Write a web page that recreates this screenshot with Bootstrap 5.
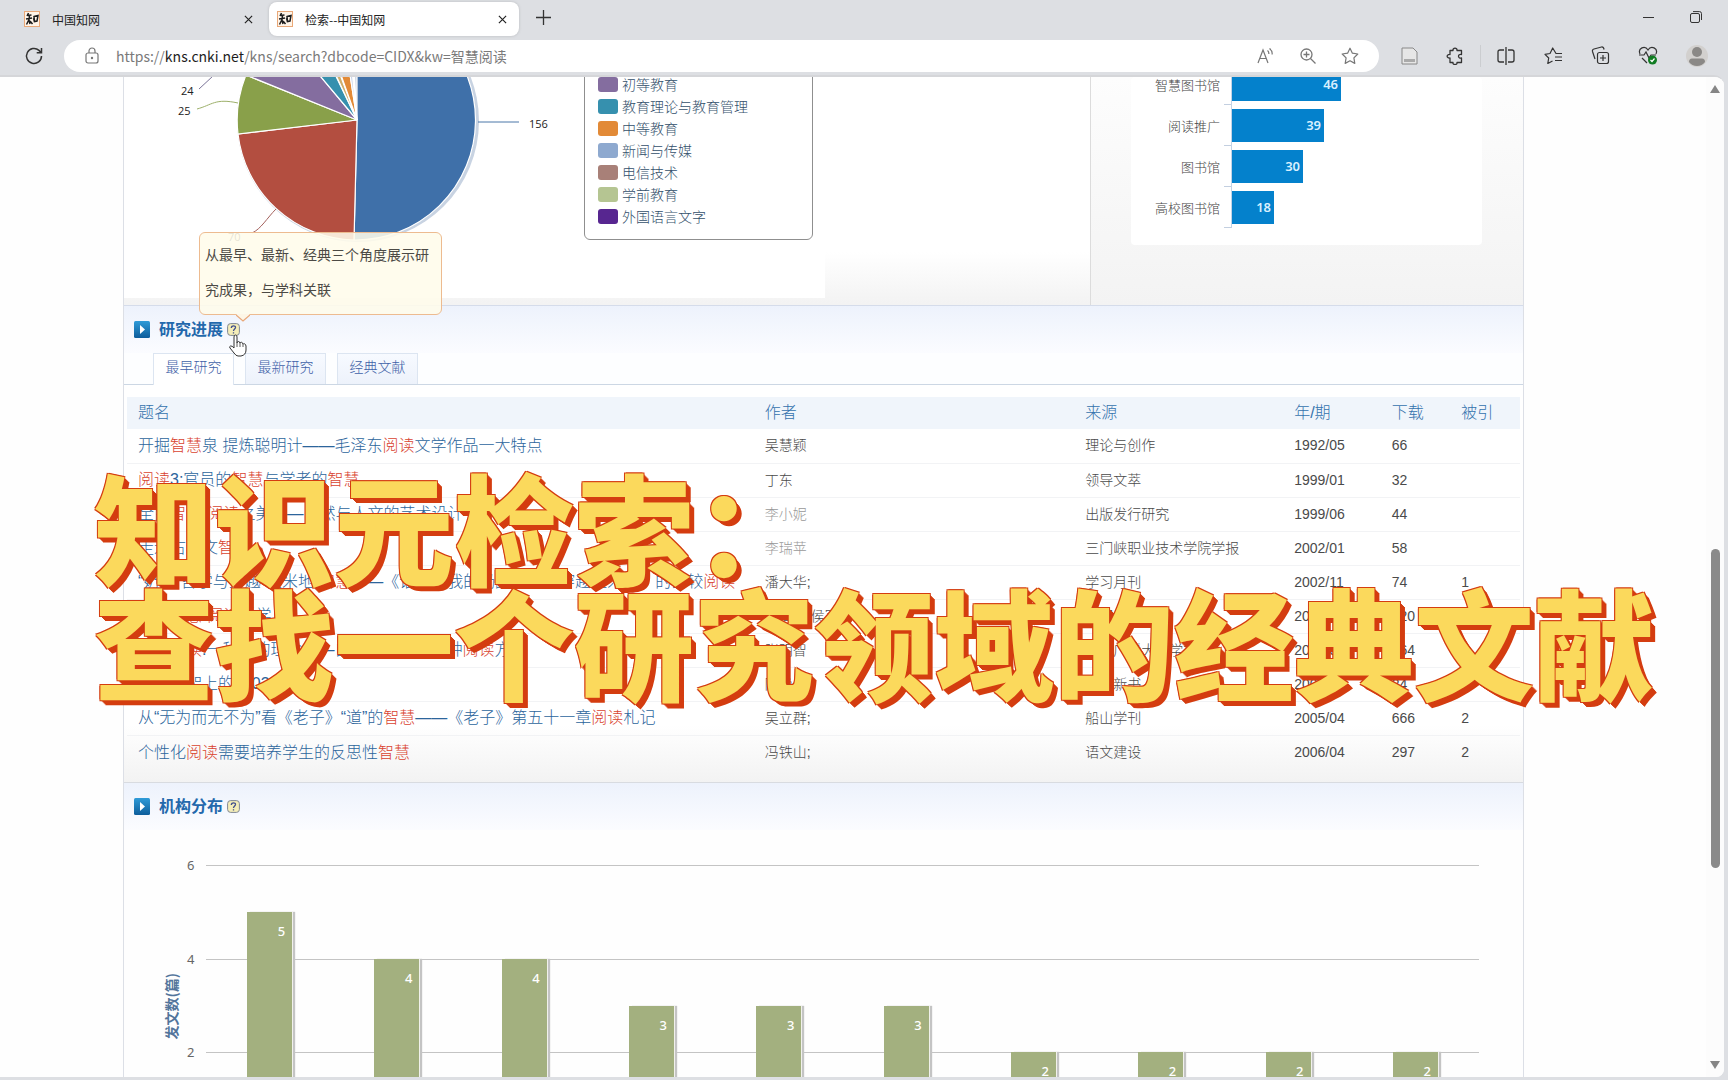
<!DOCTYPE html>
<html lang="zh-CN">
<head>
<meta charset="utf-8">
<meta name="viewport" content="width=device-width, initial-scale=1">
<title>检索--中国知网</title>
<link href="https://cdn.jsdelivr.net/npm/bootstrap@5.3.0/dist/css/bootstrap.min.css" rel="stylesheet">
<style>
  body { font-family: "Liberation Sans", "Noto Sans CJK SC", sans-serif; font-size: 14px; background: #dddfe3; }
  button { color: inherit; }
  a { text-decoration: none; }

  /* browser frame */
  .strip { height: 38px; padding: 2px 0 0 16px; font: 12px "Noto Sans CJK SC", sans-serif; color: #222; }
  .strip-tab { width: 253px; height: 34px; padding: 0 8px; border-radius: 8px; }
  .strip-tab.current { width: 250px; background: #fff; box-shadow: 0 0 3px #b8babd; }
  .plain { border: 0; background: none; padding: 0; display: inline-flex; align-items: center; justify-content: center; }
  .win { width: 48px; height: 30px; }
  .toolbar { height: 37px; padding: 0 20px 2px 0; color: #333; }
  .omni { height: 32px; border-radius: 16px; background: #fff; padding: 0 16px; margin-left: 20px; color: #777; }
  .omni-text { font: 14px/32px "Noto Sans CJK SC", sans-serif; color: #7a7a7a; }
  .omni-text b { font-weight: 400; color: #1d1d1d; }
  .tools { width: 329px; padding: 0 0 0 18px; }
  .tools .vr { margin: 0 -12px; opacity: .1; }
  .sheet { border-top: 2px solid #d5d6d9; border-radius: 0 10px 8px 0; background: #fefefe; margin: 0 4px 3px 0; }
  .scroller { width: 18px; padding: 8px 0; background: #fcfcfc; }
  .thumb { width: 9px; height: 319px; border-radius: 5px; background: #8a8a8a; }

  /* page column */
  .page { padding: 0 182px 0 123px; }
  .column { border: solid #dcdfe6; border-width: 0 1px; }
  .overview { height: 229px; border-bottom: 1px solid #d5dcea; background: linear-gradient(#fff 0 175px, #f3f3f3 226px); }
  .subject { width: 967px; border-right: 1px solid #dcdcdc; }
  .canvas-white { width: 701px; height: 221px; background: #fff; }
  .keywords { background: linear-gradient(#fdfdfd, #f3f3f3); padding: 0 40px; }
  .keywords-chart { height: 168px; max-width: 351px; background: #fff; border-radius: 4px; padding-bottom: 17px; overflow: hidden; }
  .legend-box { width: 229px; height: 171px; margin-top: -8px; border: 1px solid #8f8f8f; border-radius: 6px; padding: 3px 13px; font: 14px/22px "Noto Sans CJK SC", sans-serif; font-weight: 300; color: #33506b; }
  .legend-box li { height: 22px; }
  .swatch { width: 20px; height: 15px; border-radius: 3px; }
  .kw-row { height: 41px; font: 13px "Noto Sans CJK SC", sans-serif; font-weight: 300; color: #444; }
  .kw-name { width: 93px; }
  .kw-tick { width: 7px; border-bottom: 1px solid #c3cfe0; }
  .kw-plot { border-left: 1px solid #c3d3e6; padding: 4px 0; }
  .kw-bar { height: 33px; background: #0481cc; color: #d8f0ff; padding-right: 3px; font: 600 13px/32px "Noto Sans", sans-serif; }

  .head { height: 47px; padding-left: 10px; background: linear-gradient(#edf2fc, #fbfcff); }
  .head h2 { font-size: 16px; font-weight: 700; color: #2368ac; margin: 0 4px 0 9px; }
  .topics { border-bottom: 1px solid #ccd7e4; padding-left: 29px; gap: 11px; background: #fdfeff; }
  .topic { width: 81px; height: 31px; padding: 0 0 4px; border: 1px solid #dce5f1; border-bottom: 0; background: linear-gradient(#f7faff, #edf2fb); color: #3f62a8; font-size: 14px; font-weight: 300; }
  .topic.chosen { background: #fff; margin-bottom: -1px; height: 32px; }
  .progress-list { padding: 12px 3px 12px; background: linear-gradient(#fff 0 340px, #f2f2f2 399px); border-bottom: 1px solid #d8dbe0; }
  .papers { table-layout: fixed; width: 100%; font-weight: 300; color: #4a4a4a; }
  .papers th { height: 32px; background: #f0f5fb; color: #3472ad; font-size: 16px; font-weight: 300; padding: 0 11px 0 11px; }
  .papers td { height: 34px; border-bottom: 1px solid #f2f3f5; padding: 0 11px; white-space: nowrap; }
  .papers tr:last-child td { height: 35px; border-bottom: 0; }
  .papers a { font-size: 16px; color: #2c659c; }
  .papers em { font-style: normal; color: #d9432f; }
  .papers .faded { color: #999; }

  .tip { position: absolute; left: 199px; top: 155px; width: 243px; height: 83px; padding: 5px 5px; background: rgba(255,252,235,.88); border: 1px solid #edbb90; border-radius: 6px; font-size: 14px; line-height: 35px; color: #4c4a45; z-index: 3; }
  .tip svg { position: absolute; left: 36px; top: 81px; }
  .hand { position: absolute; left: 228px; top: 257px; z-index: 4; }

  /* institutions chart */
  .orgs { height: 420px; padding: 35px 44px 0 82px; background: #fefefe; font: 13px "Noto Sans", sans-serif; color: #666; }
  .axis-name { position: absolute; left: 38px; top: 143px; writing-mode: vertical-rl; text-orientation: sideways; transform: rotate(180deg); font: 700 14px/18px "Noto Sans CJK SC", sans-serif; color: #52749b; }
  .grid-line { position: absolute; left: 0; right: 0; border-top: 1px solid #c4c4c4; }
  .grid-line span { position: absolute; left: -19px; top: -10px; line-height: 18px; }
  .org-bar { position: relative; width: 45px; background: #a3b07f; color: #fff; padding: 9px 7px; line-height: 20px; text-align: right; box-shadow: 1px 0 0 #f1f1ec, 3px 0 1px #c4c4c4; font-weight: 500; }

  .caption-text { position: absolute; left: 94px; top: 468px; font: 900 120px/115px "Noto Sans CJK SC", sans-serif; color: #fbd95c; text-shadow: 1px 1px 0 #d43d10, -1px -1px 0 #d43d10, 1px -1px 0 #d43d10, -1px 1px 0 #d43d10, 2px 2px 0 #d43d10, 3px 3px 0 #d43d10, 4px 4px 0 #d43d10, 5px 5px 0 #d43d10; white-space: nowrap; z-index: 6; pointer-events: none; }
</style>
</head>
<body class="vh-100 overflow-hidden d-flex flex-column">
<svg class="position-absolute" width="0" height="0">
  <defs><linearGradient id="pg" x2="0" y2="1"><stop stop-color="#2f9bd8"/><stop offset="1" stop-color="#0d5d9b"/></linearGradient></defs>
  <symbol id="logo" viewBox="0 0 16 16"><rect x=".5" y=".5" width="15" height="15" fill="#fff4e8" stroke="#e9a878"/><path d="M4.500 2 3 5M3 4.500l4.500-.5M2 8l6-1M5.500 4.500 5 8.500 2.500 13.500M5 9l1 4M6 10l2.500 3M10 5.500l4-1-1 5.500-2.500.5zM9.500 7l1 4" fill="none" stroke="#1d1d1d" stroke-width="1.500"/></symbol>
  <symbol id="cross" viewBox="0 0 10 10"><path d="M1 1l8 8M9 1 1 9" stroke="currentColor" stroke-width="1.300"/></symbol>
  <symbol id="play" viewBox="0 0 16 17"><rect width="16" height="17" rx="1.500" fill="url(#pg)"/><path d="M6 4l5 4.500L6 13z" fill="#fff"/></symbol>
  <symbol id="help" viewBox="0 0 13 13"><rect x=".6" y=".6" width="11.800" height="11.800" rx="3" fill="#f4edb8" stroke="#7f8796"/><path d="M4.300 5c0-3 4.500-2.700 4.200-.3C8.300 6 6.500 6 6.500 8M6.500 9.200v1.300" fill="none" stroke="#3f4d8c" stroke-width="1.300"/></symbol>
</svg>

<header>
  <div class="strip d-flex align-items-start">
    <div class="strip-tab d-flex align-items-center">
      <svg width="16" height="16"><use href="#logo"/></svg><span class="ms-2 ps-1 me-auto">中国知网</span>
      <button class="plain me-2" aria-label="关闭"><svg width="9" height="9"><use href="#cross"/></svg></button>
    </div>
    <div class="strip-tab current d-flex align-items-center">
      <svg width="16" height="16"><use href="#logo"/></svg><span class="ms-2 ps-1 me-auto">检索--中国知网</span>
      <button class="plain me-1" aria-label="关闭"><svg width="9" height="9"><use href="#cross"/></svg></button>
    </div>
    <button class="plain win ms-0" aria-label="新建标签页"><svg width="15" height="15" viewBox="0 0 15 15"><path d="M7.500 0v15M0 7.500h15" stroke="#333" stroke-width="1.300"/></svg></button>
    <button class="plain win ms-auto" aria-label="最小化"><svg width="11" height="11"><path d="M0 5.500h11" stroke="#333"/></svg></button>
    <button class="plain win me-2" aria-label="还原"><svg width="12" height="12" viewBox="0 0 12 12" fill="none" stroke="#333"><rect x=".5" y="2.500" width="9" height="9" rx="1.500"/><path d="M3 .6h6.500q2 0 2 2V9"/></svg></button>
  </div>
  <div class="toolbar d-flex align-items-center">
    <button class="plain ms-4" aria-label="刷新"><svg width="20" height="20" viewBox="0 0 20 20" fill="none" stroke="#333" stroke-width="1.500"><path d="M17.500 10a7.500 7.500 0 1 1-2.500-5.600L17 6.500M17.500 2v4.800h-4.800"/></svg></button>
    <div class="omni d-flex align-items-center flex-grow-1">
      <svg class="ms-1" width="16" height="17" viewBox="0 0 16 17" fill="none" stroke="#777" stroke-width="1.200"><rect x="2" y="6" width="12" height="10" rx="2"/><path d="M5 6V4a3 3 0 0 1 6 0v2"/><circle cx="8" cy="11" r=".6" fill="#777"/></svg>
      <div class="omni-text ms-3 me-auto">https://<b>kns.cnki.net</b>/kns/search?dbcode=CIDX&amp;kw=智慧阅读</div>
      <div class="d-flex align-items-center gap-4 me-1">
        <button class="plain" aria-label="朗读"><svg width="18" height="18" viewBox="0 0 18 18" fill="none" stroke="#777" stroke-width="1.200"><path d="M1 16 6 3l5 13M3 11.500h6M10.500 3.500c1 .8 1.500 2 1.300 3.500M12.500 1.500c2 1.500 3 3.500 2.600 6"/></svg></button>
        <button class="plain" aria-label="缩放"><svg width="18" height="18" viewBox="0 0 18 18" fill="none" stroke="#777" stroke-width="1.300"><circle cx="7.500" cy="7.500" r="5.500"/><path d="m11.500 11.500 5 5M4.500 7.500h6M7.500 4.500v6"/></svg></button>
        <button class="plain" aria-label="收藏"><svg width="18" height="18" viewBox="0 0 18 18" fill="none" stroke="#777" stroke-width="1.200" stroke-linejoin="round"><path d="m9 1.200 2.400 5 5.400.8-3.900 3.900.9 5.500L9 13.800l-4.800 2.600.9-5.500L1.200 7l5.400-.8z"/></svg></button>
      </div>
    </div>
    <div class="tools d-flex align-items-center justify-content-between">
      <svg class="ms-1" width="17" height="18" viewBox="0 0 17 18" fill="#e6e6e6" stroke="#888"><path d="M1 1h11l4 4v12H1z"/><path d="M3 12h11v3H3z" fill="#aaa" stroke="none"/></svg>
      <svg width="18" height="18" viewBox="0 0 18 18" fill="none" stroke="#333" stroke-width="1.300" stroke-linejoin="round"><path d="M4 3.500h3C6.500.3 11.500.3 11 3.500h4.500v4c-4-.8-4 4.300 0 3.500v4.500H11c.5 2.800-4.500 2.800-4 0H4V11c-3.800.5-3.800-4 0-3.500z"/></svg>
      <span class="vr"></span>
      <svg width="18" height="18" viewBox="0 0 18 18" fill="none" stroke="#333" stroke-width="1.300"><path d="M9 0v18M7 3H3Q1 3 1 5v8q0 2 2 2h4M11 3h4q2 0 2 2v8q0 2-2 2h-4"/></svg>
      <svg width="19" height="18" viewBox="0 0 19 18" fill="none" stroke="#333" stroke-width="1.200" stroke-linejoin="round"><path d="M18 6.500h-6L8.700 1 6 6.500l-5 .8 3.700 3.700L3.800 16.500l4.700-2.500M11 10h7M11 13.500h7"/></svg>
      <svg width="19" height="19" viewBox="0 0 19 19" fill="none" stroke="#333" stroke-width="1.200"><rect x="6.500" y="6.500" width="11" height="11" rx="2"/><path d="M12 9v6M9 12h6M4 13 1.500 5.500Q1 3.500 3 3l7.500-2q2-.3 2.600 2.500"/></svg>
      <svg width="20" height="19" viewBox="0 0 20 19" fill="none" stroke="#333" stroke-width="1.200"><path d="M2 8C-.5 2 7-1 10 4c3-5 10.500-2 8 4M1 9h5l2-3 3 6 2-3h5M4 12l5 5"/><circle cx="14.500" cy="14" r="4.500" fill="#107c22" stroke="none"/><path d="m12.500 14 1.500 1.500 2.500-3" stroke="#fff"/></svg>
      <svg width="22" height="22" viewBox="0 0 22 22"><circle cx="11" cy="11" r="11" fill="#d2d0ce"/><circle cx="11" cy="7" r="5" fill="#8a8886"/><path d="M3 17q0-3.500 3-3.500h10q3 0 3 3.500-3 4-8 4t-8-4z" fill="#8a8886"/></svg>
    </div>
  </div>
</header>

<div class="sheet flex-grow-1 d-flex overflow-hidden position-relative" style="min-height:0">
  <main class="page flex-grow-1 overflow-hidden">
    <div class="column">
      <section class="overview d-flex">
        <div class="subject flex-shrink-0">
          <div class="canvas-white d-flex">
            <svg width="460" height="221" viewBox="124 77 460 221" font-family="Open Sans, sans-serif" font-size="11" fill="#222">
              <circle cx="358" cy="121" r="121" fill="#c8d3e2"/>
              <g stroke="#fff" stroke-width="1.200">
                <path d="M357 120V0A120 120 0 1 1 354 240z" fill="#3f70a9"/>
                <path d="M357 120 354 240A120 120 0 0 1 238 134z" fill="#b34e40"/>
                <path d="M357 120 238 134A120 120 0 0 1 246 75z" fill="#89a04a"/>
                <path d="M357 120 246 75 280 28z" fill="#846d9f"/>
                <path d="M357 120 280 28 305 12z" fill="#3690ae"/>
                <path d="M357 120 310 20 316 10z" fill="#cfae6b"/>
                <path d="M357 120 318 10 340 10z" fill="#e28a37"/>
                <path d="M357 120 340 10 345 0z" fill="#c9d4e8"/>
                <path d="M357 120 347 0 350 0z" fill="#d9cfd2"/>
              </g>
              <g fill="none"><path d="M478 122h41" stroke="#4a77a8"/><path d="M197 109c15-4 18-11 41-6" stroke="#9db06a"/><path d="m199 89 14-13" stroke="#7a7397"/><path d="M276 209c-9 9-15 20-24 24" stroke="#a3605c"/></g>
              <text x="529" y="128">156</text><text x="181" y="95">24</text><text x="178" y="115">25</text><text x="228" y="241">70</text>
            </svg>
            <ul class="legend-box list-unstyled mb-0">
              <li class="d-flex align-items-center gap-1"><i class="swatch" style="background:#846d9f"></i>初等教育</li>
              <li class="d-flex align-items-center gap-1"><i class="swatch" style="background:#3690ae"></i>教育理论与教育管理</li>
              <li class="d-flex align-items-center gap-1"><i class="swatch" style="background:#e28a37"></i>中等教育</li>
              <li class="d-flex align-items-center gap-1"><i class="swatch" style="background:#8ea9cf"></i>新闻与传媒</li>
              <li class="d-flex align-items-center gap-1"><i class="swatch" style="background:#a88078"></i>电信技术</li>
              <li class="d-flex align-items-center gap-1"><i class="swatch" style="background:#b5c592"></i>学前教育</li>
              <li class="d-flex align-items-center gap-1"><i class="swatch" style="background:#572690"></i>外国语言文字</li>
            </ul>
          </div>
        </div>
        <div class="keywords flex-grow-1">
          <div class="keywords-chart d-flex flex-column justify-content-end">
            <div class="kw-row d-flex"><span class="kw-name align-self-center text-end pe-1">智慧图书馆</span><i class="kw-tick"></i><div class="kw-plot"><div class="kw-bar text-end" style="width:109px">46</div></div></div>
            <div class="kw-row d-flex"><span class="kw-name align-self-center text-end pe-1">阅读推广</span><i class="kw-tick"></i><div class="kw-plot"><div class="kw-bar text-end" style="width:92px">39</div></div></div>
            <div class="kw-row d-flex"><span class="kw-name align-self-center text-end pe-1">图书馆</span><i class="kw-tick"></i><div class="kw-plot"><div class="kw-bar text-end" style="width:71px">30</div></div></div>
            <div class="kw-row d-flex"><span class="kw-name align-self-center text-end pe-1">高校图书馆</span><i class="kw-tick"></i><div class="kw-plot"><div class="kw-bar text-end" style="width:42px">18</div></div></div>
          </div>
        </div>
      </section>

      <section>
        <div class="head d-flex align-items-center"><svg width="16" height="17"><use href="#play"/></svg><h2>研究进展</h2><svg width="13" height="13"><use href="#help"/></svg></div>
        <div class="topics d-flex align-items-end">
          <button class="topic chosen">最早研究</button><button class="topic">最新研究</button><button class="topic">经典文献</button>
        </div>
        <div class="progress-list">
          <table class="papers">
            <colgroup><col style="width:45%"><col style="width:23%"><col style="width:15%"><col style="width:7%"><col style="width:5%"><col style="width:5%"></colgroup>
            <thead><tr><th>题名</th><th>作者</th><th>来源</th><th>年/期</th><th class="text-nowrap">下载</th><th class="text-nowrap">被引</th></tr></thead>
            <tbody>
              <tr><td><a href="#">开掘<em>智慧</em>泉 提炼聪明计——毛泽东<em>阅读</em>文学作品一大特点</a></td><td>吴慧颖</td><td>理论与创作</td><td>1992/05</td><td>66</td><td></td></tr>
              <tr><td><a href="#"><em>阅读</em>3:官员的<em>智慧</em>与学者的<em>智慧</em></a></td><td>丁东</td><td>领导文萃</td><td>1999/01</td><td>32</td><td></td></tr>
              <tr><td><a href="#">全民<em>智慧</em>·<em>阅读</em>之美——自然与人文的艺术设计</a></td><td class="faded">李小妮</td><td>出版发行研究</td><td>1999/06</td><td>44</td><td></td></tr>
              <tr><td><a href="#">走进古诗文<em>智慧</em></a></td><td class="faded">李瑞苹</td><td>三门峡职业技术学院学报</td><td>2002/01</td><td>58</td><td></td></tr>
              <tr><td><a href="#">“奶酪”哲学与穿越“玉米地”<em>智慧</em>——《谁动了我的奶酪》与《穿越玉米地》的比较<em>阅读</em></a></td><td>潘大华;</td><td>学习月刊</td><td>2002/11</td><td>74</td><td>1</td></tr>
              <tr><td><a href="#">生活<em>智慧</em>·<em>阅读</em>哲学</a></td><td>王海燕,侯军</td><td>中国出版评论</td><td>2003/03</td><td>120</td><td></td></tr>
              <tr><td><a href="#"><em>智慧阅读</em>:一种新的理念——自主学习方式一种<em>阅读</em>方法</a></td><td>张明智</td><td>江苏广播大学学报</td><td>2004/01</td><td>164</td><td></td></tr>
              <tr><td><a href="#">我的书架上的2003年</a></td><td>陈静</td><td>中国新书</td><td>2004/10</td><td>24</td><td></td></tr>
              <tr><td><a href="#">从“无为而无不为”看《老子》“道”的<em>智慧</em>——《老子》第五十一章<em>阅读</em>札记</a></td><td>吴立群;</td><td>船山学刊</td><td>2005/04</td><td>666</td><td>2</td></tr>
              <tr><td><a href="#">个性化<em>阅读</em>需要培养学生的反思性<em>智慧</em></a></td><td>冯铁山;</td><td>语文建设</td><td>2006/04</td><td>297</td><td>2</td></tr>
            </tbody>
          </table>
        </div>
      </section>

      <section>
        <div class="head d-flex align-items-center"><svg width="16" height="17"><use href="#play"/></svg><h2>机构分布</h2><svg width="13" height="13"><use href="#help"/></svg></div>
        <div class="orgs position-relative">
          <div class="axis-name">发文数(篇)</div>
          <div class="position-relative d-flex align-items-end" style="height:282px">
            <div class="grid-line" style="top:0"><span>6</span></div>
            <div class="grid-line" style="top:94px"><span>4</span></div>
            <div class="grid-line" style="top:187px"><span>2</span></div>
            <div class="flex-fill d-flex justify-content-center"><div class="org-bar" style="height:235px">5</div></div>
            <div class="flex-fill d-flex justify-content-center"><div class="org-bar" style="height:188px">4</div></div>
            <div class="flex-fill d-flex justify-content-center"><div class="org-bar" style="height:188px">4</div></div>
            <div class="flex-fill d-flex justify-content-center"><div class="org-bar" style="height:141px">3</div></div>
            <div class="flex-fill d-flex justify-content-center"><div class="org-bar" style="height:141px">3</div></div>
            <div class="flex-fill d-flex justify-content-center"><div class="org-bar" style="height:141px">3</div></div>
            <div class="flex-fill d-flex justify-content-center"><div class="org-bar" style="height:95px">2</div></div>
            <div class="flex-fill d-flex justify-content-center"><div class="org-bar" style="height:95px">2</div></div>
            <div class="flex-fill d-flex justify-content-center"><div class="org-bar" style="height:95px">2</div></div>
            <div class="flex-fill d-flex justify-content-center"><div class="org-bar" style="height:95px">2</div></div>
          </div>
        </div>
      </section>
    </div>
  </main>

  <div class="scroller d-flex flex-column align-items-center flex-shrink-0">
    <svg width="10" height="8"><path d="M0 8 5 0l5 8z" fill="#858585"/></svg>
    <div style="flex-grow:454"></div><div class="thumb"></div><div style="flex-grow:192"></div>
    <svg width="10" height="8"><path d="M0 0h10L5 8z" fill="#858585"/></svg>
  </div>

  <div class="tip" role="tooltip">从最早、最新、经典三个角度展示研究成果，与学科关联
    <svg width="14" height="8"><path d="M0 0h14L7 7z" fill="#fdf6e6"/><path d="m0 1 7 6 7-6" fill="none" stroke="#e9a878" stroke-width="1.300"/></svg>
  </div>
  <svg class="hand" width="20" height="23" viewBox="0 0 20 23"><path d="M6 14V3q0-2 1.500-2T9 3v6q0-1.500 1.500-1.500T12 9.500q.2-1.500 1.600-1.200T15 10.500q.3-1 1.500-.7T18 12v4q0 5-5 6h-3q-2 0-4-3l-4-5q-1-1.500.5-2T6 14z" fill="#fff" stroke="#333"/><path d="M9 9v4M12 10v3M15 11v2" stroke="#333" stroke-width=".8"/></svg>
</div>

<div class="caption-text">知识元检索：<br>查找一个研究领域的经典文献</div>
<script src="https://cdn.jsdelivr.net/npm/bootstrap@5.3.0/dist/js/bootstrap.bundle.min.js"></script>
</body>
</html>
